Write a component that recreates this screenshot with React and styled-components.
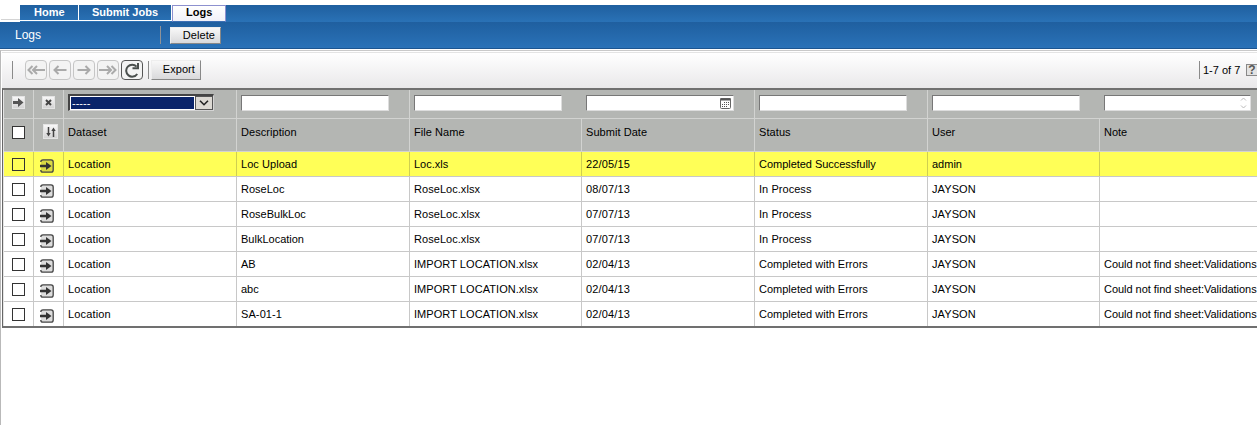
import React from "react";
import styled, { createGlobalStyle } from "styled-components";

const Global = createGlobalStyle`
  * { box-sizing: border-box; }
  body { margin: 0; background: #fff; font: 11px/13px "Liberation Sans", Arial, sans-serif; color: #000; }
  svg { display: block; flex: none; }
`;
const Page = styled.div`
  width: 1257px; height: 425px; overflow: hidden; padding-top: 5px; background: #fff;
  display: flex; flex-direction: column;
`;
const TabBar = styled.nav`
  height: 17px; flex: none; display: flex; background: linear-gradient(#1f5f9f, #2a72b6);
`;
const TabLead = styled.div`
  width: 20px; background: #fff;
  &::before { content: ""; display: block; height: 14px; margin-left: 1px; border-bottom: 1px solid #d4d4d4; }
`;
const Tab = styled.div`
  width: ${(p) => p.$w}px; height: ${(p) => (p.$active ? 17 : 16)}px; font-weight: bold; line-height: 15px;
  padding-left: ${(p) => p.$pad}px;
  color: ${(p) => (p.$active ? "#000" : "#fff")};
  background: ${(p) => (p.$active ? "linear-gradient(#fff, #f1f1f8)" : "transparent")};
  border-right: 1px solid #fff; border-bottom: 1px solid #fff;
  ${(p) => p.$active && "border: 1px solid #8d90cf; border-bottom-color: #3c6fb4; line-height: 13px;"}
`;
const TitleBar = styled.header`
  height: 27px; flex: none; display: flex; align-items: center; padding-left: 15px;
  background: linear-gradient(#1f5f9f, #2a72b8); border-bottom: 1px solid #1c5591;
  color: #fff; font-size: 12px;
`;
const Title = styled.div`width: 145px; height: 15px; line-height: 14px;`;
const Rule = styled.div`
  width: 1px; height: 18px; flex: none; background: ${(p) => p.$c || "#8a8a8a"};
  margin: 0 ${(p) => p.$r || 0}px 0 ${(p) => p.$l || 0}px;
`;
const Button = styled.button`
  width: ${(p) => p.$w}px; height: ${(p) => p.$h}px; padding: 0 5px ${(p) => p.$pb || 0}px 0; text-align: right;
  font: 11px/13px "Liberation Sans", Arial, sans-serif; color: #000; letter-spacing: .08px;
  background: linear-gradient(#f8f8f8, #d9d9db); border: 1px solid #eee;
  border-right-color: #888; border-bottom-color: #888;
`;
const Body = styled.main`
  flex: 1; margin-top: 1px; border-left: 1px solid #b9b9b9; border-top: 1px solid #c9c9c9;
  display: flex; flex-direction: column;
`;
const Toolbar = styled.div`
  height: 36px; flex: none; display: flex; align-items: center; padding: 0 0 1px 10px; margin: 1px 0 0 1px;
  background: linear-gradient(#fff, #e9e8ea); border-top: 1px solid #e4e4e4;
`;
const IconButton = styled.div`
  width: 22px; height: 20px; margin-right: 2px; border-radius: 4px; flex: none;
  border: 1px solid ${(p) => (p.$on ? "#555" : "#c6c6c6")}; color: ${(p) => (p.$on ? "#4a4f4d" : "#aaa")};
  background: #f3f3f3; display: flex; align-items: center; justify-content: center;
`;
const Count = styled.div`margin: 1px 4px 0 3px; white-space: nowrap; width: 39px;`;
const Spacer = styled.div`flex: 1;`;
const Table = styled.section`
  margin-left: 1px; border: 1px solid #666; border-top: 2px solid #707070; border-right: 0;
  border-bottom: 2px solid #707070; padding-left: 1px; width: 1255px; background: #e4e4e4;
`;
const Row = styled.div`
  display: grid; grid-template-columns: 30px 30px 173px 173px 172px 173px 173px 172px 158px;
  height: ${(p) => p.$h || 25}px; background: ${(p) => p.$bg || "#fff"};
  border-bottom: 1px solid ${(p) => p.$line || "#c8c8c8"};
  &:last-child { border-bottom: 0; height: 24px; }
`;
const Cell = styled.div`
  display: flex; align-items: center; overflow: hidden; white-space: nowrap; min-width: 0;
  padding-left: ${(p) => (p.$pad === undefined ? 4 : p.$pad)}px; padding-top: ${(p) => p.$top || 0}px;
  padding-bottom: ${(p) => p.$bottom || 0}px;
  border-right: 1px solid ${(p) => p.$line || "#c8c8c8"};
  &:last-child { border-right: 0; }
`;
const Label = styled.span`letter-spacing: ${(p) => p.$ls || 0}px; line-height: 13px;`;
const Check = styled.span`width: 13px; height: 13px; border: 1px solid #333; background: ${(p) => p.$bg || "#fff"};`;
const Field = styled.div`
  width: ${(p) => p.$w || 148}px; height: 16px; background: #fff; border: 1px solid #ddd;
  border-top-color: #777; border-left-color: #777; display: flex; align-items: center; justify-content: flex-end;
  padding-right: 2px;
`;
const Select = styled.div`
  width: 146px; height: 17px; border: 1px solid #d4d4d4; border-top: 2px solid #444; border-left: 2px solid #444;
  background: #fff; padding: 0 0 0 1px; display: flex; align-items: center;
`;
const Selected = styled.div`
  flex: 1; height: 12px; background: #0a246a; color: #fff; padding-left: 1px; line-height: 13px;
`;
const DropButton = styled.div`
  width: 18px; height: 14px; border: 1px solid #555; background: #dcd9d3; margin-left: 1px;
  display: flex; align-items: center; justify-content: center;
`;
const MiniButton = styled.div`
  width: ${(p) => p.$s}px; height: ${(p) => p.$s}px; background: linear-gradient(#f7f7f7, #d4d4d4);
  border: 1px solid #e4e4e4; display: flex; align-items: center; justify-content: center;
`;
const Help = styled.div`
  width: 11px; height: 12px; border: 1px solid #888; border-right: 0; background: #e2e2e2; color: #555; font-weight: bold;
  font-size: 12px; line-height: 11px; text-align: center; flex: none;
`;

const navPaths = {
  first: "M5.5 2 L1.5 6 L5.5 10 M10 2 L6 6 L10 10 M6 6 H18",
  prev: "M7.5 2 L3.5 6 L7.5 10 M3.5 6 H15.5",
  next: "M10.5 2 L14.5 6 L10.5 10 M14.5 6 H2.5",
  last: "M12.5 2 L16.5 6 L12.5 10 M8 2 L12 6 L8 10 M12 6 H0",
};
const NavIcon = ({ d }) => (
  <svg width="18" height="12" viewBox="0 0 18 12"><path d={d} fill="none" stroke="currentColor" strokeWidth="2" /></svg>
);
const RefreshIcon = () => (
  <svg width="18" height="16" viewBox="0 0 18 16">
    <path d="M14.2 12 A6 6 0 1 1 13.6 4.6" fill="none" stroke="currentColor" strokeWidth="2" />
    <path d="M15 1 V6.3 H9.5" fill="none" stroke="currentColor" strokeWidth="2" />
  </svg>
);
const OpenIcon = ({ bg }) => (
  <svg width="14" height="14" viewBox="0 0 14 14">
    <rect x="1" y="1" width="12" height="12" rx="2" fill={bg} />
    <path d="M.8 3 Q.8 .8 3 .8 H11 Q13.2 .8 13.2 3 V11 Q13.2 13.2 11 13.2 H3 Q.8 13.2 .8 11" fill="none" stroke="#444" strokeWidth="1.3" />
    <path d="M0 5.7 H6 V3 L11.5 7 L6 11 V8.3 H0 Z" fill="#333" />
  </svg>
);
const CalendarIcon = () => (
  <svg width="11" height="12" viewBox="0 0 11 12">
    <path d="M.5 1.5 H10.5 V10.5 Q10.5 11.5 9.5 11.5 H1.5 Q.5 11.5 .5 10.5 Z" fill="#fff" stroke="#666" />
    <path d="M1 2.5 H10" stroke="#555" strokeWidth="2" />
    <path d="M4 5.5 H9 M2 7.5 H9 M2 9.5 H7" stroke="#555" strokeDasharray="1 1" />
  </svg>
);

const G = "#b4b6b3";
const headLine = "#d2d3d1";
const headers = ["Dataset", "Description", "File Name", "Submit Date", "Status", "User", "Note"];
const spacing = {
  "Dataset": 0.12, "Description": 0.05, "File Name": 0.05, "Submit Date": 0.05, "Status": 0.08,
  "Location": 0.15, "Loc Upload": 0.05, "Loc.xls": 0, "RoseLoc": 0, "RoseLoc.xlsx": 0.05,
  "IMPORT LOCATION.xlsx": 0.06, "Completed Successfully": -0.03, "In Process": 0.05, "JAYSON": 0.1,
  "Could not find sheet:Validations": -0.04, "SA-01-1": 0.1,
  "22/05/15": 0.15, "08/07/13": 0.15, "07/07/13": 0.15, "02/04/13": 0.15,
};
const Text = ({ children }) => <Label $ls={spacing[children] ?? 0}>{children}</Label>;
const rows = [
  ["Loc Upload", "Loc.xls", "22/05/15", "Completed Successfully", "admin", ""],
  ["RoseLoc", "RoseLoc.xlsx", "08/07/13", "In Process", "JAYSON", ""],
  ["RoseBulkLoc", "RoseLoc.xlsx", "07/07/13", "In Process", "JAYSON", ""],
  ["BulkLocation", "RoseLoc.xlsx", "07/07/13", "In Process", "JAYSON", ""],
  ["AB", "IMPORT LOCATION.xlsx", "02/04/13", "Completed with Errors", "JAYSON", "Could not find sheet:Validations"],
  ["abc", "IMPORT LOCATION.xlsx", "02/04/13", "Completed with Errors", "JAYSON", "Could not find sheet:Validations"],
  ["SA-01-1", "IMPORT LOCATION.xlsx", "02/04/13", "Completed with Errors", "JAYSON", "Could not find sheet:Validations"],
];

export default function App() {
  return (
    <Page>
      <Global />
      <TabBar>
        <TabLead />
        <Tab $w={59} $pad={14}>Home</Tab><Tab $w={93} $pad={13}>Submit Jobs</Tab><Tab $w={54} $pad={13} $active>Logs</Tab>
      </TabBar>
      <TitleBar>
        <Title>Logs</Title><Rule $c="#8f9297" $r={9} />
        <Button $w={51} $h={17}>Delete</Button>
      </TitleBar>
      <Body>
        <Toolbar>
          <Rule $r={12} />
          {["first", "prev", "next", "last"].map((k) => <IconButton key={k}><NavIcon d={navPaths[k]} /></IconButton>)}
          <IconButton $on><RefreshIcon /></IconButton>
          <Rule $l={3} $r={2} />
          <Button $w={50} $h={20} $pb={2}>Export</Button>
          <Spacer /><Rule /><Count>1-7 of 7</Count><Help>?</Help>
        </Toolbar>
        <Table>
          <Row $h={29} $bg={G} $line={headLine}>
            <Cell $pad={8} $bottom={4} $line={headLine}><MiniButton $s={13}>
              <svg width="11" height="9" viewBox="0 0 11 9"><path d="M0 3 H5 V0 L10.5 4.5 L5 9 V6 H0 Z" fill="#555" /></svg>
            </MiniButton></Cell>
            <Cell $pad={8} $bottom={4} $line={headLine}><MiniButton $s={13}>
              <svg width="7" height="7" viewBox="0 0 7 7"><path d="M1 1 L6 6 M6 1 L1 6" stroke="#444" strokeWidth="2" /></svg>
            </MiniButton></Cell>
            <Cell $bottom={3} $line={headLine}><Select><Selected>-----</Selected><DropButton>
              <svg width="10" height="6" viewBox="0 0 10 6"><path d="M1 .7 L5 4.7 L9 .7" fill="none" stroke="#222" strokeWidth="1.6" /></svg>
            </DropButton></Select></Cell>
            <Cell $bottom={2} $line={headLine}><Field /></Cell>
            <Cell $bottom={2} $line={G}><Field /></Cell>
            <Cell $bottom={2} $line={headLine}><Field><CalendarIcon /></Field></Cell>
            <Cell $bottom={2} $line={headLine}><Field /></Cell>
            <Cell $bottom={2} $line={G}><Field /></Cell>
            <Cell $bottom={2}><Field $w={147}>
              <svg width="9" height="12" viewBox="0 0 9 12"><path d="M2 3.5 L4.5 1 L7 3.5 M2 8.5 L4.5 11 L7 8.5" fill="none" stroke="#bbb" /></svg>
            </Field></Cell>
          </Row>
          <Row $h={33} $bg={G} $line={headLine}>
            <Cell $pad={8} $bottom={5} $line={headLine}><Check /></Cell>
            <Cell $pad={9} $bottom={7} $line={headLine}><MiniButton $s={15}>
              <svg width="10" height="10" viewBox="0 0 10 10"><path d="M2.5 0 V7 M7.5 3 V10" stroke="#444" strokeWidth="1.5" /><path d="M.3 6 H4.7 L2.5 9.5 Z M5.3 4 H9.7 L7.5 .5 Z" fill="#444" /></svg>
            </MiniButton></Cell>
            {headers.map((h) => <Cell key={h} $bottom={6} $line={headLine}><Text>{h}</Text></Cell>)}
          </Row>
          {rows.map((r, i) => {
            const bg = i === 0 ? "#ffff57" : "#fff";
            const line = i === 0 ? "#cfcf50" : "#c8c8c8";
            return (
              <Row key={i} $bg={bg}>
                <Cell $pad={8} $line={line}><Check $bg={bg} /></Cell>
                <Cell $pad={6} $top={3} $line={line}><OpenIcon bg={i === 0 ? "#d9d944" : "#ddd"} /></Cell>
                {["Location", ...r].map((t, j) => <Cell key={j} $line={line}><Text>{t}</Text></Cell>)}
              </Row>
            );
          })}
        </Table>
      </Body>
    </Page>
  );
}
